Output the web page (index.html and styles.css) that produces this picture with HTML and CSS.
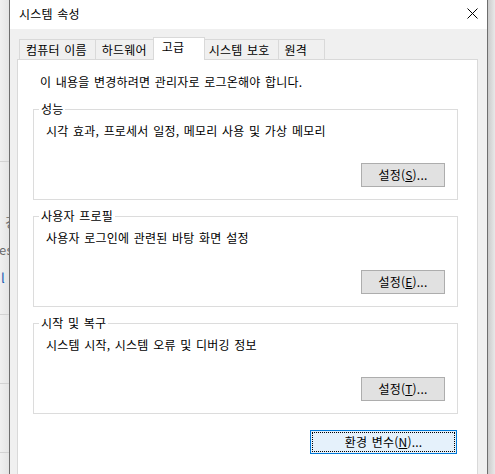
FILE: index.html
```html
<!DOCTYPE html>
<html lang="ko">
  <head>
    <meta charset="UTF-8" />
    <meta name="viewport" content="width=device-width, initial-scale=1.0" />
    <title>시스템 속성</title>
    <link rel="stylesheet" href="styles.css">
  </head>
  <body>
    <div class="desktop">
      <div class="behind">
        <div class="behind-block top"></div>
        <div class="behind-block middle">
          <div class="frag frag-a">경</div>
          <div class="frag frag-b">es</div>
          <div class="frag frag-c">l</div>
        </div>
        <div class="behind-block short"></div>
        <div class="behind-block short"></div>
      </div>

      <div class="window">
        <div class="titlebar">
          <span class="title">시스템 속성</span>
          <svg class="close" width="11" height="11" viewBox="0 0 11 11">
            <path d="M0.5 0.5L10.5 10.5M10.5 0.5L0.5 10.5" stroke="#000" stroke-width="1" fill="none" />
          </svg>
        </div>

        <div class="client">
          <div class="tabs">
            <div class="tab">컴퓨터 이름</div>
            <div class="tab">하드웨어</div>
            <div class="tab selected">고급</div>
            <div class="tab">시스템 보호</div>
            <div class="tab">원격</div>
          </div>

          <div class="panel">
            <p class="note">이 내용을 변경하려면 관리자로 로그온해야 합니다.</p>

            <fieldset class="group">
              <legend>성능</legend>
              <p class="desc">시각 효과, 프로세서 일정, 메모리 사용 및 가상 메모리</p>
              <div class="actions">
                <button class="btn">설정(<u>S</u>)...</button>
              </div>
            </fieldset>

            <fieldset class="group">
              <legend>사용자 프로필</legend>
              <p class="desc">사용자 로그인에 관련된 바탕 화면 설정</p>
              <div class="actions">
                <button class="btn">설정(<u>E</u>)...</button>
              </div>
            </fieldset>

            <fieldset class="group">
              <legend>시작 및 복구</legend>
              <p class="desc">시스템 시작, 시스템 오류 및 디버깅 정보</p>
              <div class="actions">
                <button class="btn">설정(<u>T</u>)...</button>
              </div>
            </fieldset>

            <div class="actions env">
              <button class="btn focused">환경 변수(<u>N</u>)...</button>
            </div>
          </div>
        </div>
      </div>

      <div class="shadow"></div>
    </div>
  </body>
</html>
```

FILE: styles.css
```css
* {
  box-sizing: border-box;
  margin: 0;
  padding: 0;
}

body {
  width: 495px;
  height: 474px;
  overflow: hidden;
  background-color: #f0f0f0;
  font-family: "Noto Sans CJK KR", "Malgun Gothic", sans-serif;
  font-size: 12px;
  line-height: 16px;
  letter-spacing: 0.2px;
  word-spacing: 1px;
  color: #000;
}

.desktop {
  display: flex;
  height: 474px;
}

/* window behind the dialog */
.behind {
  width: 9px;
  flex-shrink: 0;
  overflow: hidden;
  background: linear-gradient(to right, #f0f0f0, #e4e4e4);
  color: #6a6a6a;
}

.behind-block {
  border-bottom: 1px solid #d2d2d2;
}

.behind-block.top {
  height: 162px;
}

.behind-block.middle {
  height: 153px;
  padding-top: 46px;
}

.behind-block.short {
  height: 69px;
}

.frag {
  height: 28px;
  line-height: 28px;
  white-space: nowrap;
  font-size: 13px;
}

.frag-a {
  padding-left: 5px;
}

.frag-b {
  margin-left: -1px;
}

.frag-c {
  color: #1a5fb4;
  margin-left: 1px;
}

.window {
  width: 479px;
  flex-shrink: 0;
  display: flex;
  flex-direction: column;
  background-color: #f0f0f0;
  border-left: 1px solid #6e6e6e;
  border-right: 1px solid #6e6e6e;
}

.shadow {
  flex: 1;
  background: linear-gradient(to right, #cbcbcb, #e8e8e8);
}

.titlebar {
  height: 29px;
  display: flex;
  align-items: center;
  justify-content: space-between;
  padding: 0 9px 1px 9px;
  background-color: #fff;
}

.close {
  display: block;
  margin-top: -2px;
}

.client {
  flex: 1;
  overflow: hidden;
  padding-top: 8px;
}

.tabs {
  display: flex;
  align-items: flex-end;
  height: 22px;
  padding-left: 10px;
}

.tab {
  height: 20px;
  min-width: 47px;
  padding: 2px 8px 0 6px;
  margin-left: -1px;
  border: 1px solid #d9d9d9;
  border-bottom: none;
  background-color: #f0f0f0;
  white-space: nowrap;
}

.tab.selected {
  height: 23px;
  min-width: 52px;
  padding: 1px 8px 0;
  margin: 0 -2px -1px -3px;
  background-color: #fff;
  z-index: 1;
}

.panel {
  height: 500px;
  margin: 0 9px 0 7px;
  padding: 14px 19px 0 15px;
  background-color: #fff;
  border: 1px solid #d9d9d9;
}

.note {
  padding-left: 7px;
}

.group {
  margin-top: 8px;
  padding: 6px 12px 12px 5px;
  border: 1px solid #dcdcdc;
}

.note + .group {
  margin-top: 11px;
}

.group legend {
  padding: 0 2px;
}

.desc {
  padding-left: 7px;
}

.actions {
  display: flex;
  justify-content: flex-end;
  margin-top: 24px;
}

.actions.env {
  margin-top: 16px;
  padding-right: 1px;
}

.btn {
  width: 84px;
  height: 24px;
  font: inherit;
  line-height: 16px;
  letter-spacing: 0.2px;
  word-spacing: 1px;
  color: #000;
  background-color: #e1e1e1;
  border: 1px solid #adadad;
}

.btn.focused {
  width: 147px;
  background-color: #e5f1fb;
  border-color: #0078d7;
  outline: 1px dotted #000;
  outline-offset: -3px;
}
```
